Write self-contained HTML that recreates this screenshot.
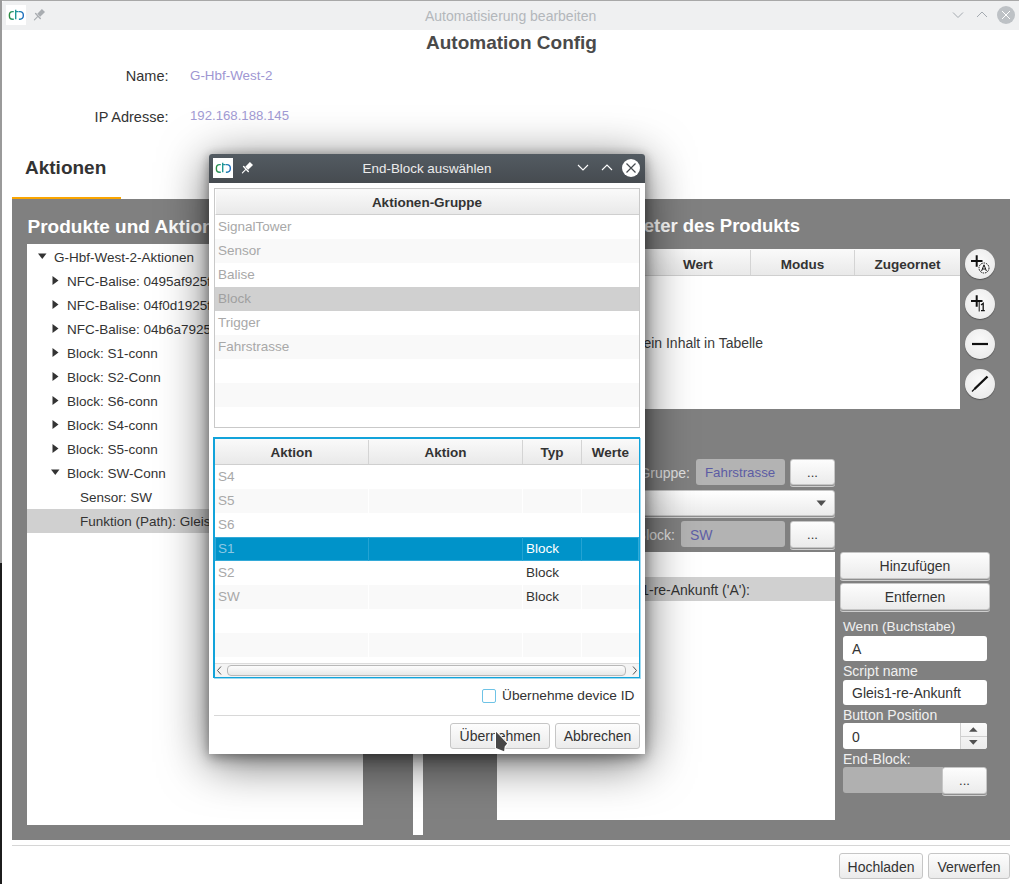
<!DOCTYPE html>
<html><head><meta charset="utf-8">
<style>
*{box-sizing:border-box;margin:0;padding:0}
html,body{width:1019px;height:884px;overflow:hidden;background:#fff}
body{position:relative;font-family:"Liberation Sans",sans-serif;font-size:13.5px;color:#333}
.a{position:absolute}
.t{position:absolute;white-space:nowrap;line-height:1}
.b{font-weight:bold}
.btn{position:absolute;border:1px solid #c6c6c6;border-radius:3px;background:linear-gradient(#fdfdfd,#ebebeb)}
.btng{box-shadow:0 1px 0 #8f8f8f,0 2px 0 rgba(225,225,225,0.8)}
.btxt{position:absolute;white-space:nowrap;line-height:1;left:0;right:0;text-align:center}
</style></head><body>
<!-- desktop edges -->
<div class="a" style="left:0;top:0;width:1019px;height:1px;background:#a8a8a8"></div>
<div class="a" style="left:0;top:0;width:2px;height:563px;background:#9a9a9a"></div>
<div class="a" style="left:0;top:563px;width:2px;height:321px;background:#1c1c1c"></div>

<!-- main window -->
<div class="a" id="win" style="left:2px;top:1px;width:1017px;height:883px;background:#fff;border-radius:3px 0 0 0;overflow:hidden">
  <div class="a" style="left:0;top:0;width:1017px;height:29px;background:#eff0f1"></div>
</div>

<!-- titlebar contents (page coords) -->
<div class="a" style="left:6px;top:5px;width:20px;height:20px;background:#fff"></div>
<svg class="a" style="left:6px;top:5px" width="20" height="20" viewBox="0 0 20 20">
  <defs><linearGradient id="lg" gradientUnits="userSpaceOnUse" x1="3" y1="0" x2="17" y2="0"><stop offset="0" stop-color="#2e8b3e"/><stop offset="0.5" stop-color="#1f9a9a"/><stop offset="1" stop-color="#1f6fc0"/></linearGradient></defs>
  <path d="M7.8 6.6 H6.6 A3.2 3.2 0 0 0 3.4 9.8 V11 A3.2 3.2 0 0 0 6.6 14.2 H7.8" fill="none" stroke="url(#lg)" stroke-width="1.4"/>
  <path d="M9.7 4.8 V14.3 M9.7 6.6 H12.6" fill="none" stroke="url(#lg)" stroke-width="1.4"/>
  <path d="M12.9 6.6 H14.1 A3.2 3.2 0 0 1 17.3 9.8 V11 A3.2 3.2 0 0 1 14.1 14.2 H12.9" fill="none" stroke="url(#lg)" stroke-width="1.4"/>
</svg>
<svg class="a" style="left:33px;top:8px" width="14" height="14" viewBox="0 0 14 14">
  <path d="M8.9 1 L12 4 L7.2 8.7 L4.3 5.8 Z" fill="#a9adb1"/>
  <path d="M2.6 5.6 L7.3 10.4" stroke="#a9adb1" stroke-width="1.4" stroke-linecap="round"/>
  <path d="M4.6 8.6 L1.4 11.8" stroke="#a9adb1" stroke-width="1.1" stroke-linecap="round"/>
</svg>
<div class="t" style="left:425px;top:9px;font-size:14px;color:#b3b7bb">Automatisierung bearbeiten</div>
<svg class="a" style="left:950px;top:8px" width="60" height="16" viewBox="0 0 60 16">
  <path d="M3 4.5 L8 9.5 L13 4.5" fill="none" stroke="#a4aab0" stroke-width="1"/>
  <path d="M27 9 L32 4 L37 9" fill="none" stroke="#a4aab0" stroke-width="1"/>
</svg>
<svg class="a" style="left:996px;top:5px" width="20" height="20" viewBox="0 0 20 20">
  <circle cx="10" cy="10" r="9" fill="#bdc1c5"/>
  <path d="M6 6 L14 14 M14 6 L6 14" stroke="#fff" stroke-width="1"/>
</svg>

<!-- header -->
<div class="t b" style="left:426px;top:33px;font-size:19px;color:#4a4a4a">Automation Config</div>
<div class="t" style="left:90px;top:69px;width:78.5px;text-align:right;font-size:14.5px;color:#333">Name:</div>
<div class="t" style="left:190px;top:69px;font-size:13.4px;color:#9e96d2">G-Hbf-West-2</div>
<div class="t" style="left:90px;top:109.5px;width:78.5px;text-align:right;font-size:14.5px;color:#333">IP Adresse:</div>
<div class="t" style="left:190px;top:109px;font-size:13.2px;color:#a29bd4">192.168.188.145</div>

<div class="t b" style="left:25px;top:158px;font-size:19px;color:#333">Aktionen</div>
<div class="a" style="left:12px;top:197px;width:109px;height:2px;background:#faa500"></div>
<div class="a" style="left:12px;top:199px;width:998px;height:641px;background:#808080"></div>
<div class="t b" style="left:27.5px;top:217px;font-size:19px;color:#fff">Produkte und Aktionen</div>

<!-- tree -->
<div class="a" style="left:27px;top:244px;width:336px;height:581px;background:#fff"></div>

<div class="t" style="left:54px;top:251px">G-Hbf-West-2-Aktionen</div>
<svg class="a" style="left:38px;top:253px" width="9" height="7" viewBox="0 0 9 7"><path d="M0 0.5 H8.5 L4.25 6 Z" fill="#333"/></svg>
<div class="t" style="left:67px;top:275px">NFC-Balise: 0495af925f0000</div>
<svg class="a" style="left:52px;top:276px" width="7" height="9" viewBox="0 0 7 9"><path d="M0.5 0 V9 L6.5 4.5 Z" fill="#333"/></svg>
<div class="t" style="left:67px;top:299px">NFC-Balise: 04f0d1925f0000</div>
<svg class="a" style="left:52px;top:300px" width="7" height="9" viewBox="0 0 7 9"><path d="M0.5 0 V9 L6.5 4.5 Z" fill="#333"/></svg>
<div class="t" style="left:67px;top:323px">NFC-Balise: 04b6a7925f0000</div>
<svg class="a" style="left:52px;top:324px" width="7" height="9" viewBox="0 0 7 9"><path d="M0.5 0 V9 L6.5 4.5 Z" fill="#333"/></svg>
<div class="t" style="left:67px;top:347px">Block: S1-conn</div>
<svg class="a" style="left:52px;top:348px" width="7" height="9" viewBox="0 0 7 9"><path d="M0.5 0 V9 L6.5 4.5 Z" fill="#333"/></svg>
<div class="t" style="left:67px;top:371px">Block: S2-Conn</div>
<svg class="a" style="left:52px;top:372px" width="7" height="9" viewBox="0 0 7 9"><path d="M0.5 0 V9 L6.5 4.5 Z" fill="#333"/></svg>
<div class="t" style="left:67px;top:395px">Block: S6-conn</div>
<svg class="a" style="left:52px;top:396px" width="7" height="9" viewBox="0 0 7 9"><path d="M0.5 0 V9 L6.5 4.5 Z" fill="#333"/></svg>
<div class="t" style="left:67px;top:419px">Block: S4-conn</div>
<svg class="a" style="left:52px;top:420px" width="7" height="9" viewBox="0 0 7 9"><path d="M0.5 0 V9 L6.5 4.5 Z" fill="#333"/></svg>
<div class="t" style="left:67px;top:443px">Block: S5-conn</div>
<svg class="a" style="left:52px;top:444px" width="7" height="9" viewBox="0 0 7 9"><path d="M0.5 0 V9 L6.5 4.5 Z" fill="#333"/></svg>
<div class="t" style="left:67px;top:467px">Block: SW-Conn</div>
<svg class="a" style="left:51px;top:469px" width="9" height="7" viewBox="0 0 9 7"><path d="M0 0.5 H8.5 L4.25 6 Z" fill="#333"/></svg>
<div class="t" style="left:80px;top:491px">Sensor: SW</div>
<div class="a" style="left:27px;top:509px;width:336px;height:24px;background:#d0d0d0"></div>
<div class="t" style="left:80px;top:515px">Funktion (Path): Gleis1-re-Ankunft</div>
<!-- right panel -->
<div class="t b" style="left:580px;top:217px;width:220px;text-align:right;font-size:18.5px;color:#fff">Parameter des Produkts</div>
<div class="a" style="left:425px;top:249px;width:535px;height:160px;background:#fff"></div>
<div class="a" style="left:425px;top:249px;width:535px;height:27px;background:linear-gradient(#fafafa,#e9e9e9);border-bottom:1px solid #cfcfcf"></div>
<div class="a" style="left:750px;top:250px;width:1px;height:25px;background:#d4d4d4"></div>
<div class="a" style="left:854px;top:250px;width:1px;height:25px;background:#d4d4d4"></div>
<div class="t b" style="left:683px;top:258px;font-size:13.5px;color:#333">Wert</div>
<div class="t b" style="left:751px;top:258px;width:103px;text-align:center;font-size:13.5px;color:#333">Modus</div>
<div class="t b" style="left:855px;top:258px;width:105px;text-align:center;font-size:13.5px;color:#333">Zugeornet</div>
<div class="t" style="left:560px;top:335.5px;width:203px;text-align:right;font-size:14px;color:#3a3a3a">Kein Inhalt in Tabelle</div>

<!-- round buttons -->
<div class="a" style="left:965px;top:249px;width:30px;height:30px;border-radius:50%;background:radial-gradient(circle at 50% 40%,#fafafa,#e6e6e6);box-shadow:0 1px 1px rgba(0,0,0,0.35)"></div>
<div class="a" style="left:965px;top:289px;width:30px;height:30px;border-radius:50%;background:radial-gradient(circle at 50% 40%,#fafafa,#e6e6e6);box-shadow:0 1px 1px rgba(0,0,0,0.35)"></div>
<div class="a" style="left:965px;top:329px;width:30px;height:30px;border-radius:50%;background:radial-gradient(circle at 50% 40%,#fafafa,#e6e6e6);box-shadow:0 1px 1px rgba(0,0,0,0.35)"></div>
<div class="a" style="left:965px;top:369px;width:30px;height:30px;border-radius:50%;background:radial-gradient(circle at 50% 40%,#fafafa,#e6e6e6);box-shadow:0 1px 1px rgba(0,0,0,0.35)"></div>
<svg class="a" style="left:965px;top:249px" width="30" height="150" viewBox="0 0 30 150">
  <path d="M6 12 H17.5 M11.7 6.3 V17.8" stroke="#111" stroke-width="2"/>
  <circle cx="19" cy="19" r="5" fill="#fafafa" stroke="#111" stroke-width="1" stroke-dasharray="1.6 0.9"/>
  <path d="M16.6 22 L19 15.8 L21.4 22 M17.5 20 H20.5" fill="none" stroke="#111" stroke-width="1"/>
  <path d="M6 52 H17.5 M11.7 46.3 V57.8" stroke="#111" stroke-width="2"/>
  <path d="M14.2 52.5 V62.5" stroke="#111" stroke-width="1"/>
  <path d="M16 56 L18.2 54.3 V61.6 M16 61.6 H19.8" fill="none" stroke="#111" stroke-width="1.3"/>
  <path d="M7 95 H23" stroke="#111" stroke-width="2.2"/>
  <path d="M9.5 140 L22.5 127.5" stroke="#111" stroke-width="2.4"/>
  <path d="M7 142.5 L10 139.5" stroke="#111" stroke-width="1.2"/>
</svg>

<!-- form rows -->
<div class="t" style="left:400px;top:466px;width:290px;text-align:right;font-size:14px;color:#e2e2e2">Aktionen-Gruppe:</div>
<div class="a" style="left:696px;top:459px;width:89px;height:26px;border-radius:3px;background:#b3b3b3"></div>
<div class="t" style="left:705px;top:466px;font-size:13.3px;color:#5c5ca4">Fahrstrasse</div>
<div class="btn btng" style="left:790px;top:459px;width:45px;height:26px"><div class="btxt" style="top:6px;font-size:13px">...</div></div>
<div class="a btng" style="left:425px;top:490px;width:410px;height:26px;border-radius:3px;background:linear-gradient(#ffffff,#ebebeb);border:1px solid #c6c6c6"></div>
<svg class="a" style="left:816px;top:500px" width="11" height="7" viewBox="0 0 11 7"><path d="M0.5 0.5 H10 L5.25 6 Z" fill="#505050"/></svg>
<div class="t" style="left:400px;top:528px;width:275px;text-align:right;font-size:14px;color:#e2e2e2">End-Block:</div>
<div class="a" style="left:681px;top:521px;width:104px;height:26px;border-radius:3px;background:#b3b3b3"></div>
<div class="t" style="left:690px;top:528px;font-size:14px;color:#5f5fa6">SW</div>
<div class="btn btng" style="left:790px;top:521px;width:45px;height:27px"><div class="btxt" style="top:6px;font-size:13px">...</div></div>

<!-- list -->
<div class="a" style="left:413px;top:552px;width:10px;height:283px;background:#fff"></div>
<div class="a" style="left:497px;top:552px;width:338px;height:268px;background:#fff"></div>
<div class="a" style="left:497px;top:577px;width:338px;height:24px;background:#d0d0d0"></div>
<div class="t" style="left:540px;top:583px;width:210px;text-align:right;font-size:14px;color:#333">Gleis1-re-Ankunft ('A'):</div>

<!-- right column -->
<div class="btn btng" style="left:840px;top:552px;width:150px;height:27px"><div class="btxt" style="top:6px;font-size:14px">Hinzufügen</div></div>
<div class="btn btng" style="left:840px;top:583px;width:150px;height:27px"><div class="btxt" style="top:6px;font-size:14px">Entfernen</div></div>
<div class="t" style="left:843px;top:620px;font-size:13.6px;color:#f0f0f0">Wenn (Buchstabe)</div>
<div class="a" style="left:843px;top:636px;width:144px;height:25px;border-radius:3px;background:#fff"></div>
<div class="t" style="left:852px;top:642px;font-size:14px;color:#333">A</div>
<div class="t" style="left:843px;top:664px;font-size:14px;color:#f0f0f0">Script name</div>
<div class="a" style="left:843px;top:680px;width:144px;height:25px;border-radius:3px;background:#fff"></div>
<div class="t" style="left:852px;top:686px;font-size:14px;color:#333">Gleis1-re-Ankunft</div>
<div class="t" style="left:843px;top:708px;font-size:14px;color:#f0f0f0">Button Position</div>
<div class="a" style="left:843px;top:723px;width:144px;height:26px;border-radius:3px;background:#fff"></div>
<div class="a" style="left:960px;top:723px;width:27px;height:26px;border-radius:0 3px 3px 0;background:linear-gradient(#fbfbfb,#ececec);border-left:1px solid #d0d0d0"></div>
<div class="a" style="left:961px;top:736px;width:26px;height:1px;background:#d0d0d0"></div>
<svg class="a" style="left:967px;top:727px" width="14" height="20" viewBox="0 0 14 20"><path d="M2 4.8 L6.3 0.2 L10.6 4.8 Z M2 13 L6.3 17.7 L10.6 13 Z" fill="#505050"/></svg>
<div class="t" style="left:852px;top:730px;font-size:14px;color:#333">0</div>
<div class="t" style="left:843px;top:752px;font-size:14px;color:#f0f0f0">End-Block:</div>
<div class="a" style="left:843px;top:767px;width:100px;height:26px;border-radius:3px 0 0 3px;background:#b0b0b0"></div>
<div class="btn btng" style="left:942px;top:767px;width:45px;height:27px"><div class="btxt" style="top:6px;font-size:13px">...</div></div>

<!-- bottom buttons -->
<div class="btn" style="left:839px;top:853px;width:84px;height:26px"><div class="btxt" style="top:6px;font-size:14px">Hochladen</div></div>
<div class="btn" style="left:928px;top:853px;width:82px;height:26px"><div class="btxt" style="top:6px;font-size:14px">Verwerfen</div></div>

<!-- bottom -->
<div class="a" style="left:12px;top:845px;width:998px;height:1px;background:#d6d6d6"></div>
<!-- dialog -->
<div class="a" id="dlg" style="left:209px;top:154px;width:436px;height:600px;background:#fff;border-radius:3px 3px 0 0;box-shadow:0 0 10px rgba(0,0,0,0.18),0 5px 14px rgba(0,0,0,0.28),0 8px 48px rgba(0,0,0,0.6)">
  <div class="a" style="left:0;top:0;width:436px;height:29px;border-radius:3px 3px 0 0;background:linear-gradient(#535b62,#464b50)"></div>
</div>
<div class="a" style="left:213px;top:158px;width:20px;height:20px;background:#fff"></div>
<svg class="a" style="left:213px;top:158px" width="20" height="20" viewBox="0 0 20 20">
  <defs><linearGradient id="lg2" gradientUnits="userSpaceOnUse" x1="3" y1="0" x2="17" y2="0"><stop offset="0" stop-color="#2e8b3e"/><stop offset="0.5" stop-color="#1f9a9a"/><stop offset="1" stop-color="#1f6fc0"/></linearGradient></defs>
  <path d="M7.8 6.6 H6.6 A3.2 3.2 0 0 0 3.4 9.8 V11 A3.2 3.2 0 0 0 6.6 14.2 H7.8" fill="none" stroke="url(#lg2)" stroke-width="1.4"/>
  <path d="M9.7 4.8 V14.3 M9.7 6.6 H12.6" fill="none" stroke="url(#lg2)" stroke-width="1.4"/>
  <path d="M12.9 6.6 H14.1 A3.2 3.2 0 0 1 17.3 9.8 V11 A3.2 3.2 0 0 1 14.1 14.2 H12.9" fill="none" stroke="url(#lg2)" stroke-width="1.4"/>
</svg>
<svg class="a" style="left:241px;top:161px" width="14" height="14" viewBox="0 0 14 14">
  <path d="M8.9 1 L12 4 L7.2 8.7 L4.3 5.8 Z" fill="#fff"/>
  <path d="M2.6 5.6 L7.3 10.4" stroke="#fff" stroke-width="1.4" stroke-linecap="round"/>
  <path d="M4.6 8.6 L1.4 11.8" stroke="#fff" stroke-width="1.1" stroke-linecap="round"/>
</svg>
<div class="t" style="left:209px;top:162px;width:436px;text-align:center;font-size:13.4px;color:#ececec">End-Block auswählen</div>
<svg class="a" style="left:576px;top:161px" width="40" height="14" viewBox="0 0 40 14">
  <path d="M2 4 L7 9 L12 4" fill="none" stroke="#fff" stroke-width="1.1"/>
  <path d="M26 9 L31 4 L36 9" fill="none" stroke="#fff" stroke-width="1.1"/>
</svg>
<svg class="a" style="left:621px;top:158px" width="20" height="20" viewBox="0 0 20 20">
  <circle cx="10" cy="10" r="9" fill="#fff"/>
  <path d="M5.5 5.5 L14.5 14.5 M14.5 5.5 L5.5 14.5" stroke="#464b50" stroke-width="1.2"/>
</svg>

<!-- table 1 -->
<div class="a" style="left:214px;top:188px;width:426px;height:240px;border:1px solid #c9c9c9;background:#fff"></div>
<div class="a" style="left:215px;top:189px;width:424px;height:26px;background:linear-gradient(#fafafa,#e9e9e9);border-bottom:1px solid #cfcfcf;border-left:1px solid #fff"></div>
<div class="t b" style="left:215px;top:196px;width:424px;text-align:center;font-size:13.5px;color:#333">Aktionen-Gruppe</div>
<div class="a" style="left:215px;top:239px;width:424px;height:24px;background:#f9f9f9"></div>
<div class="a" style="left:215px;top:287px;width:424px;height:24px;background:#d0d0d0"></div>
<div class="a" style="left:215px;top:335px;width:424px;height:24px;background:#f9f9f9"></div>
<div class="a" style="left:215px;top:383px;width:424px;height:24px;background:#f9f9f9"></div>
<div class="t" style="left:218px;top:220px;font-size:13.5px;color:#a8a8a8">SignalTower</div>
<div class="t" style="left:218px;top:244px;font-size:13.5px;color:#a8a8a8">Sensor</div>
<div class="t" style="left:218px;top:268px;font-size:13.5px;color:#a8a8a8">Balise</div>
<div class="t" style="left:218px;top:292px;font-size:13.5px;color:#a0a0a0">Block</div>
<div class="t" style="left:218px;top:316px;font-size:13.5px;color:#a8a8a8">Trigger</div>
<div class="t" style="left:218px;top:340px;font-size:13.5px;color:#a8a8a8">Fahrstrasse</div>

<!-- table 2 -->
<div class="a" style="left:213px;top:437px;width:427px;height:241px;border:2px solid #12a3da;border-right-width:1px;border-bottom-width:1px;box-shadow:1px 1px 0 rgba(40,170,222,0.45);background:#fff"></div>
<div class="a" style="left:215px;top:439px;width:424px;height:26px;background:linear-gradient(#fafafa,#e9e9e9);border-bottom:1px solid #cfcfcf"></div>
<div class="a" style="left:368px;top:440px;width:1px;height:24px;background:#d4d4d4"></div>
<div class="a" style="left:522px;top:440px;width:1px;height:24px;background:#d4d4d4"></div>
<div class="a" style="left:581px;top:440px;width:1px;height:24px;background:#d4d4d4"></div>
<div class="t b" style="left:215px;top:446px;width:153px;text-align:center;font-size:13.5px;color:#333">Aktion</div>
<div class="t b" style="left:369px;top:446px;width:153px;text-align:center;font-size:13.5px;color:#333">Aktion</div>
<div class="t b" style="left:523px;top:446px;width:58px;text-align:center;font-size:13.5px;color:#333">Typ</div>
<div class="t b" style="left:582px;top:446px;width:57px;text-align:center;font-size:13.5px;color:#333">Werte</div>
<div class="a" style="left:215px;top:489px;width:424px;height:24px;background:#f9f9f9"></div>
<div class="a" style="left:215px;top:537px;width:424px;height:24px;background:#0093c9;border:1px solid #33aad8"></div>
<div class="a" style="left:215px;top:585px;width:424px;height:24px;background:#f9f9f9"></div>
<div class="a" style="left:215px;top:633px;width:424px;height:24px;background:#f9f9f9"></div>
<div class="a" style="left:368px;top:489px;width:1px;height:24px;background:#fff"></div>
<div class="a" style="left:522px;top:489px;width:1px;height:24px;background:#fff"></div>
<div class="a" style="left:581px;top:489px;width:1px;height:24px;background:#fff"></div>
<div class="a" style="left:368px;top:537px;width:1px;height:24px;background:#23a3d3"></div>
<div class="a" style="left:522px;top:537px;width:1px;height:24px;background:#23a3d3"></div>
<div class="a" style="left:581px;top:537px;width:1px;height:24px;background:#23a3d3"></div>
<div class="a" style="left:368px;top:585px;width:1px;height:24px;background:#fff"></div>
<div class="a" style="left:522px;top:585px;width:1px;height:24px;background:#fff"></div>
<div class="a" style="left:581px;top:585px;width:1px;height:24px;background:#fff"></div>
<div class="a" style="left:368px;top:633px;width:1px;height:24px;background:#fff"></div>
<div class="a" style="left:522px;top:633px;width:1px;height:24px;background:#fff"></div>
<div class="a" style="left:581px;top:633px;width:1px;height:24px;background:#fff"></div>
<div class="t" style="left:218px;top:470px;font-size:13.5px;color:#a8a8a8">S4</div>
<div class="t" style="left:218px;top:494px;font-size:13.5px;color:#a8a8a8">S5</div>
<div class="t" style="left:218px;top:518px;font-size:13.5px;color:#a8a8a8">S6</div>
<div class="t" style="left:218px;top:542px;font-size:13.5px;color:#8cc8e4">S1</div>
<div class="t" style="left:218px;top:566px;font-size:13.5px;color:#a8a8a8">S2</div>
<div class="t" style="left:218px;top:590px;font-size:13.5px;color:#a8a8a8">SW</div>
<div class="t" style="left:526px;top:542px;font-size:13.5px;color:#fff">Block</div>
<div class="t" style="left:526px;top:566px;font-size:13.5px;color:#333">Block</div>
<div class="t" style="left:526px;top:590px;font-size:13.5px;color:#333">Block</div>
<!-- hscroll -->
<div class="a" style="left:215px;top:663px;width:424px;height:14px;background:#f4f4f4;border-top:1px solid #dcdcdc"></div>
<svg class="a" style="left:215px;top:664px" width="424" height="13" viewBox="0 0 424 13">
  <path d="M6 2.5 L2.5 6.5 L6 10.5" fill="none" stroke="#555" stroke-width="1"/>
  <path d="M418 2.5 L421.5 6.5 L418 10.5" fill="none" stroke="#555" stroke-width="1"/>
</svg>
<div class="a" style="left:227px;top:665px;width:399px;height:11px;border-radius:4px;border:1px solid #b8b8b8;background:linear-gradient(#fdfdfd,#e8e8e8)"></div>

<!-- checkbox -->
<div class="a" style="left:482px;top:689px;width:14px;height:14px;border:1px solid #6ec3e6;border-radius:2px;background:#fff"></div>
<div class="t" style="left:502px;top:689px;font-size:13.7px;color:#333">Übernehme device ID</div>
<div class="a" style="left:214px;top:715px;width:426px;height:1px;background:#d8d8d8"></div>
<div class="btn" style="left:450px;top:723px;width:100px;height:26px"><div class="btxt" style="top:5px;font-size:14px">Übernehmen</div></div>
<div class="btn" style="left:555px;top:723px;width:85px;height:26px"><div class="btxt" style="top:5px;font-size:14px">Abbrechen</div></div>
<!-- cursor -->
<svg class="a" style="left:485px;top:722px" width="30" height="34" viewBox="0 0 30 34">
  <path d="M11 9.8 L22.2 21.6 L19.7 24.6 L19.1 29.2 L11 25.9 Z" fill="#474747" stroke="#fff" stroke-width="2" stroke-linejoin="round" paint-order="stroke"/>
</svg>

</body></html>
